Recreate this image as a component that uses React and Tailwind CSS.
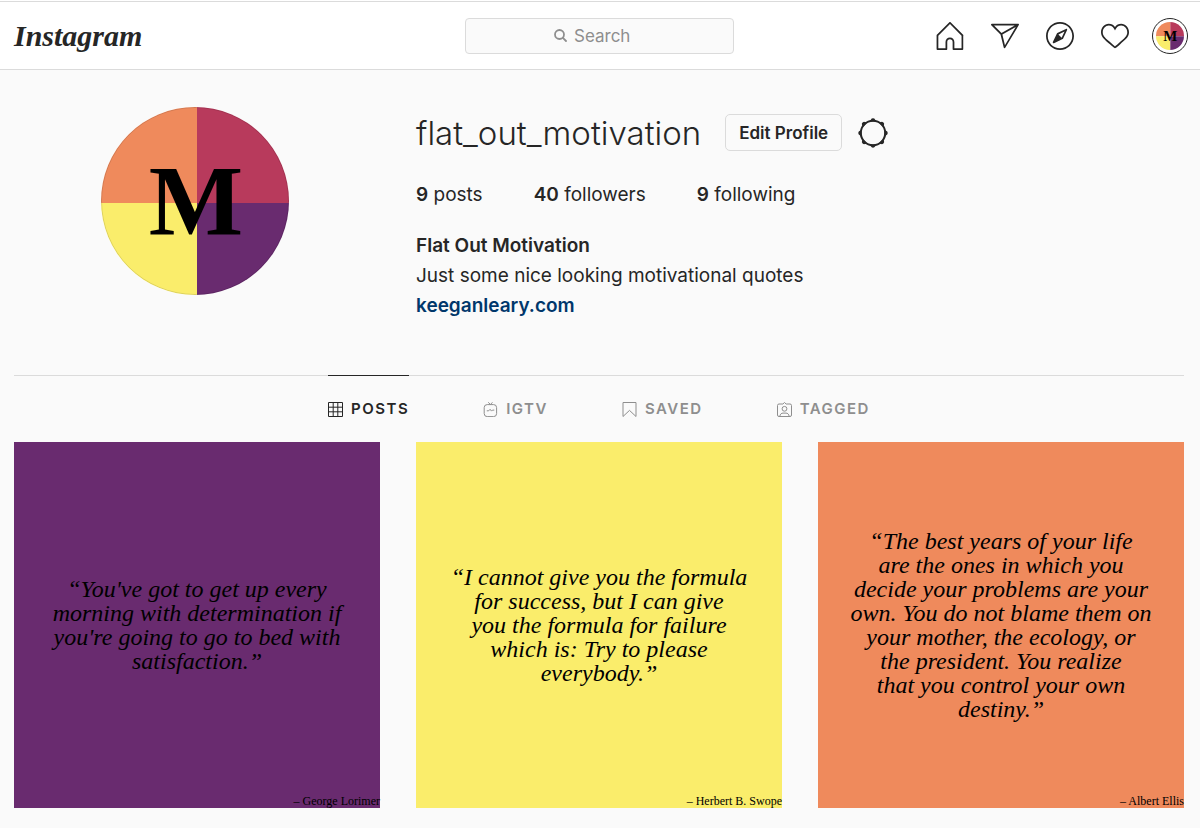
import clsx from 'clsx';

const posts = [
    {
        author: 'George Lorimer',
        color: 'bg-[#692b6f]',
        lines: ["“You've got to get up every", 'morning with determination if', "you're going to go to bed with", 'satisfaction.”'],
    },
    {
        author: 'Herbert B. Swope',
        color: 'bg-[#faed6b]',
        lines: ['“I cannot give you the formula', 'for success, but I can give', 'you the formula for failure', 'which is: Try to please', 'everybody.”'],
    },
    {
        author: 'Albert Ellis',
        color: 'bg-[#ef8a5c]',
        lines: [
            '“The best years of your life',
            'are the ones in which you',
            'decide your problems are your',
            'own. You do not blame them on',
            'your mother, the ecology, or',
            'the president. You realize',
            'that you control your own',
            'destiny.”',
        ],
    },
];

const navIcons = [
    {
        label: 'Home',
        d: 'M45.3 48H30c-.8 0-1.5-.7-1.5-1.5V34.2c0-2.6-2-4.6-4.6-4.6s-4.6 2-4.6 4.6v12.3c0 .8-.7 1.5-1.5 1.5H2.5c-.8 0-1.5-.7-1.5-1.5V23c0-.4.2-.8.4-1.1L22.9.4c.6-.6 1.5-.6 2.1 0l21.5 21.5c.4.4.6 1.1.3 1.6 0 .1-.1.1-.1.2v22.8c.1.8-.6 1.5-1.4 1.5zm-13.8-3h12.3V23.4L24 3.6l-20 20V45h12.3V34.2c0-4.3 3.3-7.6 7.6-7.6s7.6 3.3 7.6 7.6V45z',
    },
    {
        label: 'Direct',
        d: 'M47.8 3.8c-.3-.5-.8-.8-1.3-.8h-45C.9 3.1.3 3.5.1 4S0 5.2.4 5.7l15.9 15.6 5.5 22.6c.1.6.6 1 1.2 1.1h.2c.5 0 1-.3 1.3-.7l23.2-39c.4-.4.4-1 .1-1.5zM5.2 6.1h35.5L18 18.7 5.2 6.1zm18.7 33.6l-4.4-18.4L42.4 8.6 23.9 39.7z',
    },
    {
        label: 'Explore',
        d: 'M24 0C10.8 0 0 10.8 0 24s10.8 24 24 24 24-10.8 24-24S37.2 0 24 0zm0 45C12.4 45 3 35.6 3 24S12.4 3 24 3s21 9.4 21 21-9.4 21-21 21zm10.2-33.2l-14.8 7c-.3.1-.6.4-.7.7l-7 14.8c-.3.6-.2 1.3.3 1.7.3.3.7.4 1.1.4.2 0 .4 0 .6-.1l14.8-7c.3-.1.6-.4.7-.7l7-14.8c.3-.6.2-1.3-.3-1.7-.4-.5-1.1-.6-1.7-.3zm-7.4 15l-5.5-5.5 10.5-5-5 10.5z',
    },
    {
        label: 'Activity',
        d: 'M34.6 6.1c5.7 0 10.4 5.2 10.4 11.5 0 6.8-5.9 11-11.5 16S25 41.3 24 41.9c-1.1-.7-4.7-4-9.5-8.3-5.7-5-11.5-9.2-11.5-16C3 11.3 7.7 6.1 13.4 6.1c4.2 0 6.5 2 8.1 4.3 1.9 2.6 2.2 3.9 2.5 3.9.3 0 .6-1.3 2.5-3.9 1.6-2.3 3.9-4.3 8.1-4.3m0-3c-4.5 0-7.9 1.8-10.6 5.6-2.7-3.7-6.1-5.5-10.6-5.5C6 3.1 0 9.6 0 17.6c0 7.3 5.4 12 10.6 16.5.6.5 1.3 1.1 1.9 1.7l2.3 2c4.4 3.9 6.6 5.9 7.6 6.5.5.3 1.1.5 1.6.5.6 0 1.1-.2 1.6-.5 1-.6 2.8-2.2 7.8-6.8l2-1.8c.7-.6 1.3-1.2 2-1.7C42.7 29.6 48 25 48 17.6c0-8-6-14.5-13.4-14.5z',
    },
];

const Avatar = ({ className }) => (
    <svg viewBox="0 0 188 188" className={clsx('rounded-full', className)} role="img" aria-label="flat_out_motivation">
        <rect width="96" height="96" fill="#ef8a5c" />
        <rect x="96" width="92" height="96" fill="#b83a5c" />
        <rect y="96" width="96" height="92" fill="#faed6b" />
        <rect x="96" y="96" width="92" height="92" fill="#692b6f" />
        <circle cx="94" cy="94" r="93.5" fill="none" stroke="#000" strokeOpacity="0.12" />
        <text x="95" y="127" textAnchor="middle" fontSize="100" fontWeight="700" fontFamily="'Liberation Serif', serif">M</text>
    </svg>
);

const GearIcon = () => (
    <svg viewBox="0 0 30 30" className="w-[30px] h-[30px]" aria-hidden="true">
        <circle cx="15" cy="15" r="12.2" fill="none" stroke="#262626" strokeWidth="2" />
        {[0, 45, 90, 135, 180, 225, 270, 315].map(angle => (
            <path key={angle} d="M11.2 3.6Q12.6 2.6 13 1.4Q13.4.3 15 .3T17 1.4Q17.4 2.6 18.8 3.6Z" fill="#262626" transform={`rotate(${angle} 15 15)`} />
        ))}
    </svg>
);

const TabIcon = ({ children }) => (
    <svg viewBox="0 0 15 15" className="w-[15px] h-[15px]" fill="none" stroke="currentColor" aria-hidden="true">{children}</svg>
);

const tabs = [
    { label: 'POSTS', active: true, icon: <path d="M.5.5h14v14H.5zM5.2.5v14M9.8.5v14M.5 5.2h14M.5 9.8h14" /> },
    {
        label: 'IGTV',
        icon: (
            <>
                <rect x="1.2" y="2.6" width="12.4" height="12" rx="3" />
                <path d="M5.2.3l2.2 2.1L9.6.3M3.8 8.8h1.9l1.4-1.5 1.4 1.8 1-1h1.8" />
            </>
        ),
    },
    { label: 'SAVED', icon: <path d="M1 .5h13v14L7.5 8.4 1 14.5z" /> },
    {
        label: 'TAGGED',
        icon: (
            <>
                <path d="M2 2h3.9L7.5.5 9.1 2H13q1.5 0 1.5 1.5V13q0 1.5-1.5 1.5H2Q.5 14.5.5 13V3.5Q.5 2 2 2z" />
                <circle cx="7.5" cy="6.8" r="2.4" />
                <path d="M2.8 14.3c.4-2.3 1.7-3.2 3.2-3.2h3c1.5 0 2.8.9 3.2 3.2" />
            </>
        ),
    },
];

const Stat = ({ value, label }) => (
    <li><span className="font-semibold">{value}</span> {label}</li>
);

const Header = () => (
    <header className="bg-white pt-px">
        <div className="grid grid-cols-[1fr_auto_1fr] items-center h-[69px] border-y border-[#dbdbdb] pl-[14px] pr-4">
            <a href="#" className="justify-self-start font-['Liberation_Serif',serif] italic font-bold text-[30px] leading-10">Instagram</a>
            <label className="flex items-center justify-center gap-[7px] w-[269px] h-9 pr-[13px] rounded-[4px] border border-[#dbdbdb] bg-[#fafafa]">
                <svg viewBox="0 0 13 13" className="w-[13px] h-[13px]" fill="none" stroke="#8e8e8e" strokeWidth="1.8" strokeLinecap="round" aria-hidden="true">
                    <circle cx="5.5" cy="5.5" r="4.5" />
                    <path d="M8.9 8.9l3.1 3.1" />
                </svg>
                <input type="text" placeholder="Search" aria-label="Search" className="w-[57px] bg-transparent text-[17px] leading-6 outline-none placeholder:text-[#8e8e8e]" />
            </label>
            <nav className="flex items-center gap-[27px] justify-self-end">
                {navIcons.map(icon => (
                    <a key={icon.label} href="#" aria-label={icon.label}>
                        <svg viewBox="0 0 48 48" className="w-7 h-7" fill="#262626">
                            <path d={icon.d} />
                        </svg>
                    </a>
                ))}
                <a href="#" className="rounded-full outline outline-[#262626] outline-offset-[3px]">
                    <Avatar className="w-7 h-7" />
                </a>
            </nav>
        </div>
    </header>
);

const Profile = () => (
    <section className="grid grid-cols-3 gap-x-9 pt-[37px] pb-[54px]">
        <div className="flex justify-center pr-1">
            <Avatar className="w-[188px] h-[188px]" />
        </div>
        <div className="col-span-2 pt-[7px] text-[19px] leading-[30px]">
            <div className="flex items-center">
                <h2 className="text-[33px] leading-9 font-light">flat_out_motivation</h2>
                <button type="button" className="ml-6 w-[117px] h-[37px] rounded-[5px] border border-[#dbdbdb] text-[17px] leading-6 font-semibold">Edit Profile</button>
                <button type="button" aria-label="Options" className="ml-4"><GearIcon /></button>
            </div>
            <ul className="flex gap-[51px] mt-[29px]">
                <Stat value="9" label="posts" />
                <Stat value="40" label="followers" />
                <Stat value="9" label="following" />
            </ul>
            <div className="mt-[21px]">
                <h1 className="font-semibold">Flat Out Motivation</h1>
                <p>Just some nice looking motivational quotes</p>
                <a href="#" className="font-semibold text-[#00376b]">keeganleary.com</a>
            </div>
        </div>
    </section>
);

const QuoteTile = ({ post }) => (
    <article className={clsx('relative flex items-center justify-center aspect-square text-black', post.color)}>
        <p className="text-center italic text-2xl leading-6 whitespace-nowrap">
            {post.lines.map(line => (
                <span key={line} className="block">{line}</span>
            ))}
        </p>
        <span className="absolute right-0 bottom-0 text-xs leading-[14px]">– {post.author}</span>
    </article>
);

const App = () => (
    <div className="min-h-screen bg-[#fafafa] text-[#262626] font-['Inter',sans-serif]">
        <Header />
        <main className="pl-[14px] pr-4 pb-5">
            <Profile />
            <nav className="flex justify-center gap-[74px] border-t border-[#dbdbdb]">
                {tabs.map(tab => (
                    <a
                        key={tab.label}
                        href="#"
                        className={clsx(
                            'flex items-center gap-2 h-[67px] -mt-px border-t text-[15px] font-semibold tracking-widest',
                            tab.active ? 'border-[#262626]' : 'border-transparent text-[#8e8e8e]'
                        )}
                    >
                        <TabIcon>{tab.icon}</TabIcon>
                        {tab.label}
                    </a>
                ))}
            </nav>
            <div className="grid grid-cols-3 gap-9 font-['Liberation_Serif',serif]">
                {posts.map(post => (
                    <QuoteTile key={post.author} post={post} />
                ))}
            </div>
        </main>
    </div>
);

export default App;
